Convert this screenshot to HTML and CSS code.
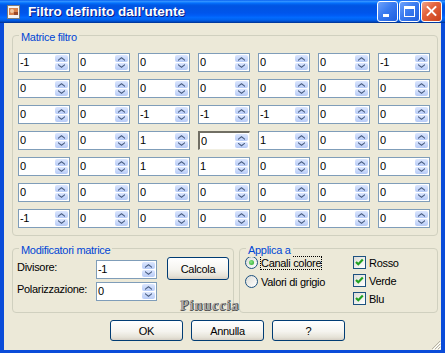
FILE: index.html
```html
<!DOCTYPE html>
<html>
<head>
    <title>Filtro definito dall'utente</title>
    <link rel="stylesheet" href="styles.css">
</head>
<body>

<div class="window">
    <div class="titlebar">
        <svg class="app-icon" width="16" height="16" viewBox="0 0 16 16">
            <rect x="1.5" y="1.5" width="12" height="13" fill="#f4f4f4" stroke="#7a7a7a"/>
            <rect x="3" y="4" width="9" height="7" fill="#d9824a"/>
            <circle cx="6" cy="7" r="2" fill="#f3c9a0"/>
            <rect x="8" y="8" width="4" height="3" fill="#9c4a2a"/>
        </svg>
        <span class="title">Filtro definito dall'utente</span>
        <div class="caption-buttons">
            <span class="cb min"></span>
            <span class="cb max"></span>
            <span class="cb close"></span>
        </div>
    </div>

    <div class="client">
        <div class="group matrix">
            <span class="legend">Matrice filtro</span>
            <div class="matrix-grid">
                <!-- row 1 -->
                <div class="spin"><span class="num">-1</span><span class="arrows"><i class="up"></i><i class="down"></i></span></div>
                <div class="spin"><span class="num">0</span><span class="arrows"><i class="up"></i><i class="down"></i></span></div>
                <div class="spin"><span class="num">0</span><span class="arrows"><i class="up"></i><i class="down"></i></span></div>
                <div class="spin"><span class="num">0</span><span class="arrows"><i class="up"></i><i class="down"></i></span></div>
                <div class="spin"><span class="num">0</span><span class="arrows"><i class="up"></i><i class="down"></i></span></div>
                <div class="spin"><span class="num">0</span><span class="arrows"><i class="up"></i><i class="down"></i></span></div>
                <div class="spin"><span class="num">-1</span><span class="arrows"><i class="up"></i><i class="down"></i></span></div>
                <!-- row 2 -->
                <div class="spin"><span class="num">0</span><span class="arrows"><i class="up"></i><i class="down"></i></span></div>
                <div class="spin"><span class="num">0</span><span class="arrows"><i class="up"></i><i class="down"></i></span></div>
                <div class="spin"><span class="num">0</span><span class="arrows"><i class="up"></i><i class="down"></i></span></div>
                <div class="spin"><span class="num">0</span><span class="arrows"><i class="up"></i><i class="down"></i></span></div>
                <div class="spin"><span class="num">0</span><span class="arrows"><i class="up"></i><i class="down"></i></span></div>
                <div class="spin"><span class="num">0</span><span class="arrows"><i class="up"></i><i class="down"></i></span></div>
                <div class="spin"><span class="num">0</span><span class="arrows"><i class="up"></i><i class="down"></i></span></div>
                <!-- row 3 -->
                <div class="spin"><span class="num">0</span><span class="arrows"><i class="up"></i><i class="down"></i></span></div>
                <div class="spin"><span class="num">0</span><span class="arrows"><i class="up"></i><i class="down"></i></span></div>
                <div class="spin"><span class="num">-1</span><span class="arrows"><i class="up"></i><i class="down"></i></span></div>
                <div class="spin"><span class="num">-1</span><span class="arrows"><i class="up"></i><i class="down"></i></span></div>
                <div class="spin"><span class="num">-1</span><span class="arrows"><i class="up"></i><i class="down"></i></span></div>
                <div class="spin"><span class="num">0</span><span class="arrows"><i class="up"></i><i class="down"></i></span></div>
                <div class="spin"><span class="num">0</span><span class="arrows"><i class="up"></i><i class="down"></i></span></div>
                <!-- row 4 -->
                <div class="spin"><span class="num">0</span><span class="arrows"><i class="up"></i><i class="down"></i></span></div>
                <div class="spin"><span class="num">0</span><span class="arrows"><i class="up"></i><i class="down"></i></span></div>
                <div class="spin"><span class="num">1</span><span class="arrows"><i class="up"></i><i class="down"></i></span></div>
                <div class="spin sunken"><span class="num">0</span><span class="arrows"><i class="up"></i><i class="down"></i></span></div>
                <div class="spin"><span class="num">1</span><span class="arrows"><i class="up"></i><i class="down"></i></span></div>
                <div class="spin"><span class="num">0</span><span class="arrows"><i class="up"></i><i class="down"></i></span></div>
                <div class="spin"><span class="num">0</span><span class="arrows"><i class="up"></i><i class="down"></i></span></div>
                <!-- row 5 -->
                <div class="spin"><span class="num">0</span><span class="arrows"><i class="up"></i><i class="down"></i></span></div>
                <div class="spin"><span class="num">0</span><span class="arrows"><i class="up"></i><i class="down"></i></span></div>
                <div class="spin"><span class="num">1</span><span class="arrows"><i class="up"></i><i class="down"></i></span></div>
                <div class="spin"><span class="num">1</span><span class="arrows"><i class="up"></i><i class="down"></i></span></div>
                <div class="spin"><span class="num">0</span><span class="arrows"><i class="up"></i><i class="down"></i></span></div>
                <div class="spin"><span class="num">0</span><span class="arrows"><i class="up"></i><i class="down"></i></span></div>
                <div class="spin"><span class="num">0</span><span class="arrows"><i class="up"></i><i class="down"></i></span></div>
                <!-- row 6 -->
                <div class="spin"><span class="num">0</span><span class="arrows"><i class="up"></i><i class="down"></i></span></div>
                <div class="spin"><span class="num">0</span><span class="arrows"><i class="up"></i><i class="down"></i></span></div>
                <div class="spin"><span class="num">0</span><span class="arrows"><i class="up"></i><i class="down"></i></span></div>
                <div class="spin"><span class="num">0</span><span class="arrows"><i class="up"></i><i class="down"></i></span></div>
                <div class="spin"><span class="num">0</span><span class="arrows"><i class="up"></i><i class="down"></i></span></div>
                <div class="spin"><span class="num">0</span><span class="arrows"><i class="up"></i><i class="down"></i></span></div>
                <div class="spin"><span class="num">0</span><span class="arrows"><i class="up"></i><i class="down"></i></span></div>
                <!-- row 7 -->
                <div class="spin"><span class="num">-1</span><span class="arrows"><i class="up"></i><i class="down"></i></span></div>
                <div class="spin"><span class="num">0</span><span class="arrows"><i class="up"></i><i class="down"></i></span></div>
                <div class="spin"><span class="num">0</span><span class="arrows"><i class="up"></i><i class="down"></i></span></div>
                <div class="spin"><span class="num">0</span><span class="arrows"><i class="up"></i><i class="down"></i></span></div>
                <div class="spin"><span class="num">0</span><span class="arrows"><i class="up"></i><i class="down"></i></span></div>
                <div class="spin"><span class="num">0</span><span class="arrows"><i class="up"></i><i class="down"></i></span></div>
                <div class="spin"><span class="num">0</span><span class="arrows"><i class="up"></i><i class="down"></i></span></div>
            </div>
        </div>

        <div class="lower">
            <div class="group modifiers">
                <span class="legend">Modificatori matrice</span>
                <div class="mod-grid">
                    <span class="field-label">Divisore:</span>
                    <div class="spin"><span class="num">-1</span><span class="arrows"><i class="up"></i><i class="down"></i></span></div>
                    <button class="btn calc">Calcola</button>
                    <span class="field-label">Polarizzazione:</span>
                    <div class="spin"><span class="num">0</span><span class="arrows"><i class="up"></i><i class="down"></i></span></div>
                </div>
            </div>

            <div class="group apply">
                <span class="legend">Applica a</span>
                <div class="radios">
                    <div class="option radio-row"><span class="radio checked"></span><span class="opt-text focus">Canali colore</span></div>
                    <div class="option radio-row"><span class="radio"></span><span class="opt-text">Valori di grigio</span></div>
                </div>
                <div class="checks">
                    <div class="option check-row">
                        <span class="check"><svg width="11" height="11" viewBox="0 0 11 11"><polyline points="2,5 4.3,7.3 8.8,2.6" fill="none" stroke="#21a121" stroke-width="2.2"/></svg></span>
                        <span>Rosso</span>
                    </div>
                    <div class="option check-row">
                        <span class="check"><svg width="11" height="11" viewBox="0 0 11 11"><polyline points="2,5 4.3,7.3 8.8,2.6" fill="none" stroke="#21a121" stroke-width="2.2"/></svg></span>
                        <span>Verde</span>
                    </div>
                    <div class="option check-row">
                        <span class="check"><svg width="11" height="11" viewBox="0 0 11 11"><polyline points="2,5 4.3,7.3 8.8,2.6" fill="none" stroke="#21a121" stroke-width="2.2"/></svg></span>
                        <span>Blu</span>
                    </div>
                </div>
            </div>
        </div>

        <div class="actions">
            <button class="btn">OK</button>
            <button class="btn">Annulla</button>
            <button class="btn">?</button>
        </div>

        <span class="watermark">Pinuccia</span>

        <svg class="grip" width="12" height="12" viewBox="0 0 12 12">
            <path d="M11 3 L3 11 M11 6 L6 11 M11 9 L9 11" stroke="#b5b3a6" stroke-width="1"/>
            <path d="M12 4 L4 12 M12 7 L7 12 M12 10 L10 12" stroke="#fff" stroke-width="1"/>
        </svg>
    </div>
</div>

</body>
</html>
```

FILE: styles.css
```css
body {
    margin: 0;
    font-family: "Liberation Sans", Arial, sans-serif;
    font-size: 11px;
    letter-spacing: -0.3px;
    color: #000;
}

.window {
    width: 445px;
    height: 353px;
    display: flex;
    flex-direction: column;
}

/* Title bar (XP Luna blue) */
.titlebar {
    height: 23px;
    flex: none;
    display: flex;
    align-items: center;
    background: linear-gradient(to bottom, #0058ee 0%, #3593ff 5%, #288eff 8%, #127dff 11%, #036ffc 14%, #0262ee 18%, #0057e5 24%, #0054e3 30%, #0055eb 56%, #005bf5 66%, #026afe 76%, #0062ef 86%, #0052d6 92%, #0040ab 96%, #003092 100%);
}

.app-icon {
    margin-left: 6px;
    flex: none;
}

.title {
    margin-left: 6px;
    color: #fff;
    font-weight: bold;
    font-size: 13.5px;
    letter-spacing: 0;
    text-shadow: 1px 1px 0 #0a1883;
}

.caption-buttons {
    margin-left: auto;
    margin-right: 3px;
    display: flex;
    gap: 1px;
}

.cb {
    width: 21px;
    height: 21px;
    box-sizing: border-box;
    border: 1px solid #fff;
    border-radius: 3px;
    position: relative;
    background: linear-gradient(135deg, #6fa2fb 0%, #3a7bf0 45%, #1e5fdf 100%);
}

.cb.min::after {
    content: "";
    position: absolute;
    left: 5px;
    bottom: 4px;
    width: 6px;
    height: 3px;
    background: #fff;
}

.cb.max::after {
    content: "";
    position: absolute;
    left: 4px;
    top: 4px;
    width: 9px;
    height: 7px;
    border: 1px solid #fff;
    border-top-width: 3px;
}

.cb.close {
    background: linear-gradient(135deg, #f0a58a 0%, #e4633d 40%, #c8401b 100%);
}

.cb.close::before,
.cb.close::after {
    content: "";
    position: absolute;
    left: 3px;
    top: 8px;
    width: 13px;
    height: 2px;
    background: #fff;
    transform: rotate(45deg);
}

.cb.close::after {
    transform: rotate(-45deg);
}

/* Window body */
.client {
    flex: 1;
    position: relative;
    background-color: #ece9d8;
    border: solid #0a4cd9;
    border-width: 0 4px 3px 4px;
    padding: 12px 3px 0 8px;
}

.group {
    position: relative;
    box-sizing: border-box;
    border: 1px solid #d0d0bf;
    border-radius: 4px;
}

.legend {
    position: absolute;
    top: -5px;
    left: 6px;
    padding: 0 2px;
    line-height: 13px;
    background-color: #ece9d8;
    color: #0046d5;
}

.matrix {
    padding: 17px 7px 7px 5px;
}

.matrix-grid {
    display: grid;
    grid-template-columns: repeat(7, 52px);
    grid-auto-rows: 19px;
    column-gap: 8px;
    row-gap: 7px;
}

/* Spin edit boxes */
.spin {
    display: flex;
    box-sizing: border-box;
    height: 19px;
    border: 1px solid #7f9db9;
    background-color: #fff;
}

.spin.sunken {
    border-color: #716f64 #f1efe2 #f1efe2 #716f64;
    border-width: 2px 1px 1px 2px;
}

.num {
    flex: 1;
    padding-left: 1px;
    line-height: 17px;
}

.arrows {
    width: 13px;
    margin: 1px 1px 1px 0;
    display: flex;
    flex-direction: column;
    gap: 1px;
}

.arrows i {
    flex: 1;
    position: relative;
    border-radius: 2px;
    background: linear-gradient(to bottom, #dbe6fe, #b7cbf7);
}

.arrows i::after {
    content: "";
    position: absolute;
    left: 3px;
    width: 7px;
    height: 4px;
    background-color: #4d6185;
}

.arrows .up::after {
    top: 2px;
    clip-path: polygon(0 70%, 50% 0, 100% 70%, 100% 100%, 50% 40%, 0 100%);
}

.arrows .down::after {
    top: 1px;
    clip-path: polygon(0 0, 50% 60%, 100% 0, 100% 30%, 50% 100%, 0 30%);
}

/* Lower row */
.lower {
    display: flex;
    gap: 5px;
    margin-top: 12px;
}

.modifiers {
    width: 222px;
    height: 65px;
    padding: 11px 0 0 4px;
}

.mod-grid {
    display: grid;
    grid-template-columns: 79px 61px auto;
    grid-auto-rows: 19px;
    row-gap: 3px;
}

.field-label {
    line-height: 13px;
    margin-top: 1px;
}

.calc {
    width: 62px;
    height: 23px;
    margin: -3px 0 0 10px;
}

.apply {
    width: 199px;
    height: 65px;
    display: flex;
    padding: 7px 0 0 5px;
}

.radios {
    width: 108px;
}

.option {
    display: flex;
    align-items: center;
    height: 13px;
}

.radio-row {
    margin-bottom: 6px;
}

.check-row {
    margin-bottom: 5px;
}

.radio {
    width: 13px;
    height: 13px;
    box-sizing: border-box;
    border: 1px solid #1c5180;
    border-radius: 50%;
    margin-right: 2px;
    display: flex;
    align-items: center;
    justify-content: center;
    background: linear-gradient(135deg, #dcdcd7, #fff);
}

.radio.checked::after {
    content: "";
    width: 5px;
    height: 5px;
    border-radius: 50%;
    background: radial-gradient(circle at 40% 40%, #8ce88a, #21a121);
}

.opt-text {
    border: 1px dotted transparent;
    line-height: 12px;
}

.opt-text.focus {
    border-color: #000;
}

.check {
    width: 13px;
    height: 13px;
    box-sizing: border-box;
    border: 1px solid #1c5180;
    margin-right: 3px;
    background: linear-gradient(135deg, #dcdcd7, #fff);
}

.check svg {
    display: block;
}

/* Push buttons */
.btn {
    font-family: inherit;
    font-size: 11px;
    letter-spacing: -0.3px;
    color: #000;
    padding: 0;
    border: 1px solid #003c74;
    border-radius: 3px;
    background: linear-gradient(to bottom, #ffffff 0%, #f5f4ef 55%, #e6e3d8 85%, #d6d0c5 100%);
}

.actions {
    display: flex;
    gap: 8px;
    margin-top: 7px;
    padding-left: 98px;
}

.actions .btn {
    width: 73px;
    height: 21px;
}

.watermark {
    position: absolute;
    left: 176px;
    top: 276px;
    font-family: "Liberation Serif", "Times New Roman", serif;
    font-weight: bold;
    font-size: 14px;
    line-height: 14px;
    letter-spacing: 1px;
    color: #a9a9a9;
    text-shadow: 1px 0 0 #3c3c3c, 0 1px 0 #555;
}

.grip {
    position: absolute;
    right: 0;
    bottom: 0;
}
```
